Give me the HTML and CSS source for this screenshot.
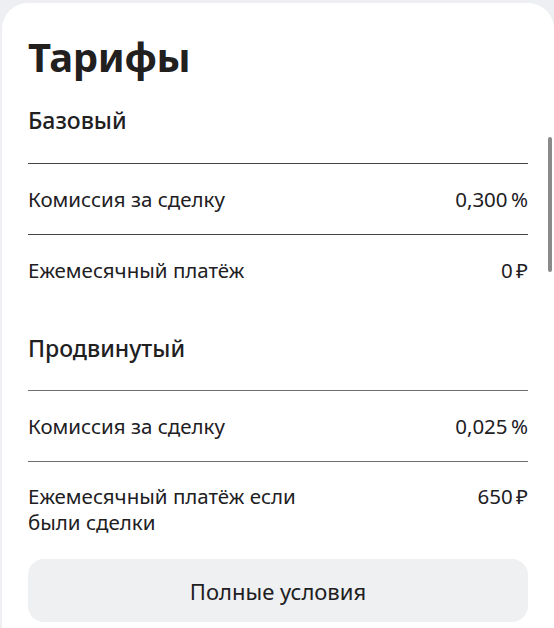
FILE: index.html
```html
<!DOCTYPE html>
<html lang="ru">
<head>
<meta charset="utf-8">
<title>Тарифы</title>
<link rel="stylesheet" href="styles.css">
</head>
<body>
<div class="card">
  <h1 class="title">Тарифы</h1>
  <div class="section-title first">Базовый</div>
  <div class="row"><span>Комиссия за сделку</span><span class="val">0,300&#8201;%</span></div>
  <div class="row"><span>Ежемесячный платёж</span><span class="val">0&#8201;₽</span></div>
  <div class="section-title">Продвинутый</div>
  <div class="row adv"><span>Комиссия за сделку</span><span class="val">0,025&#8201;%</span></div>
  <div class="row adv tall"><span class="label">Ежемесячный платёж если<br>были сделки</span><span class="val">650&#8201;₽</span></div>
  <button class="btn">Полные условия</button>
  <div class="scrollbar"></div>
</div>
</body>
</html>
```
FILE: styles.css
```css
html, body {
  margin: 0;
  padding: 0;
  background: #eeeff2;
  height: 100%;
  overflow: hidden;
}
body {
  font-family: "Noto Sans", "Open Sans", sans-serif;
  color: #21201f;
}
.card {
  position: relative;
  margin: 3px 0 0 2px;
  background: #fff;
  border-radius: 26px 26px 0 0;
  padding: 28px 26px 0 26px;
  height: 625px;
  box-sizing: border-box;
}
.title {
  margin: 0;
  font-size: 40px;
  line-height: 52px;
  font-weight: 700;
  letter-spacing: -0.3px;
}
.section-title {
  font-size: 23px;
  line-height: 24px;
  font-weight: 500;
  padding: 31px 0 30px;
}
.section-title.first {
  padding: 25px 0 31px;
}
.row {
  display: flex;
  justify-content: space-between;
  align-items: center;
  height: 70px;
  border-top: 1px solid #444;
  font-size: 20.5px;
  line-height: 24px;
}
.row.adv {
  border-top-color: #6f6f6f;
}
.row.tall {
  height: auto;
  align-items: flex-start;
  padding: 21px 0 24px;
  line-height: 26px;
}
.btn {
  display: block;
  width: 100%;
  height: 63px;
  border: none;
  border-radius: 16px;
  background: #eff0f2;
  font-family: inherit;
  font-size: 22px;
  color: #21201f;
  padding: 0;
}
.scrollbar {
  position: absolute;
  left: 546px;
  top: 134px;
  width: 4px;
  height: 135px;
  border-radius: 2px;
  background: #8a8a8a;
}
```
